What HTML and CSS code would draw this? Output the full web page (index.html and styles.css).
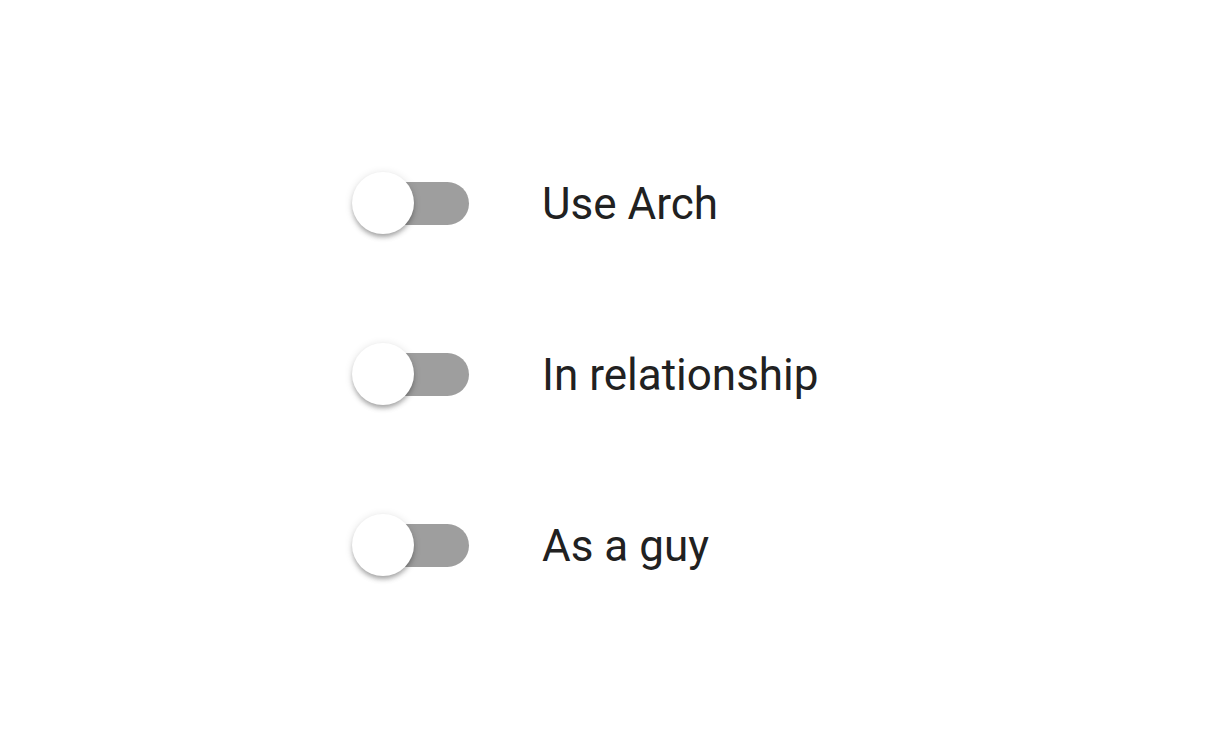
FILE: index.html
```html
<!DOCTYPE html>
<html>
<head>
<meta charset="utf-8" />
<title>Switches</title>
<link rel="stylesheet" href="styles.css">
</head>
<body>
	<div id="wrap">
		<ul class="list">
			<li class="row">
				<span class="switch"><span class="track"></span><span class="thumb"></span></span>
				<span class="label">Use Arch</span>
			</li>
			<li class="row">
				<span class="switch"><span class="track"></span><span class="thumb"></span></span>
				<span class="label">In relationship</span>
			</li>
			<li class="row">
				<span class="switch"><span class="track"></span><span class="thumb"></span></span>
				<span class="label">As a guy</span>
			</li>
		</ul>
	</div>
</body>
</html>
```

FILE: styles.css
```css
body, ul, li {margin:0; padding:0;}
li {list-style:none;}

body {background:#fff; font-family:Roboto, "Liberation Sans", sans-serif; color:#212121;}

#wrap {padding-top:117px; padding-left:352px;}
.list {display:flex; flex-direction:column;}
.row {height:171px; display:flex; align-items:center;}

.switch {position:relative; width:117px; height:62px; display:flex; align-items:center; margin-right:73px;}
.switch .track {width:105px; height:43px; margin-left:12px; margin-top:1px; border-radius:22px; background:#9e9e9e;}
.switch .thumb {position:absolute; top:0; left:0; width:62px; height:62px; border-radius:50%; background:#fff;
	box-shadow:0 4px 4px -2px rgba(0,0,0,0.2), 0 4px 5px 0 rgba(0,0,0,0.14), 0 1px 9px 0 rgba(0,0,0,0.12);}

.label {font-size:44px; line-height:1; margin-top:2px;}
```
